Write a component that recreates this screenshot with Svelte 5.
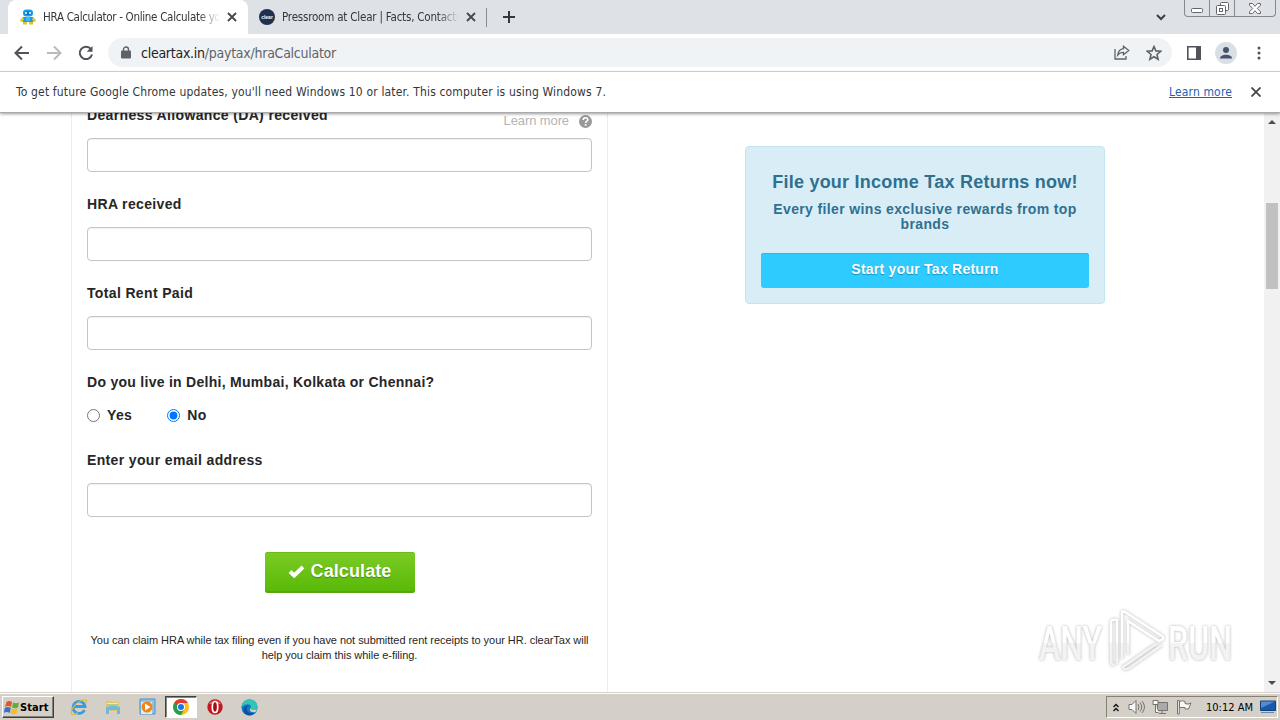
<script lang="ts">
	const fields = [
		{ id: 'da', label: 'Dearness Allowance (DA) received', help: true },
		{ id: 'hra', label: 'HRA received', help: false },
		{ id: 'rent', label: 'Total Rent Paid', help: false }
	];

	let metro = $state('no');
</script>

<div class="screen">
	<header class="tabstrip">
		<div class="tab active">
			<svg class="favicon" width="16" height="16" viewBox="0 0 16 16">
				<rect x="3" y="0.5" width="10" height="7" rx="3.2" fill="#16a5ee" />
				<rect x="4.5" y="2.3" width="7" height="3.6" rx="1.6" fill="#0878c8" />
				<circle cx="6" cy="4" r="1" fill="#fff" />
				<circle cx="10" cy="4" r="1" fill="#fff" />
				<path d="M3 8h10l.6 5H2.4z" fill="#1a9be8" />
				<path d="M3 8 0 11l1 2 3-2zM13 8l3 3-1 2-3-2zM3 13h4v2.5H3zM9 13h4v2.5H9z" fill="#e5c428" />
				<path d="M6 8h4v4H6z" fill="#2cc3f4" />
			</svg>
			<span class="tab-title">HRA Calculator - Online Calculate you</span>
			<svg class="close" width="10" height="10" viewBox="0 0 10 10"><path d="m1 1 8 8M9 1 1 9" /></svg>
		</div>
		<div class="tab second">
			<svg class="favicon" width="16" height="16" viewBox="0 0 16 16">
				<circle cx="8" cy="8" r="8" fill="#20304f" />
				<text x="8" y="10" text-anchor="middle" class="logo-text">clear</text>
			</svg>
			<span class="tab-title">Pressroom at Clear | Facts, Contacts</span>
			<svg class="close" width="10" height="10" viewBox="0 0 10 10"><path d="m1 1 8 8M9 1 1 9" /></svg>
		</div>
		<span class="separator"></span>
		<svg class="plus" width="12" height="12" viewBox="0 0 12 12"><path d="M6 0v12M0 6h12" /></svg>
		<svg class="chevron" width="10" height="7" viewBox="0 0 10 7"><path d="m1 1 4 4 4-4" /></svg>
		<div class="window-buttons">
			<span><svg width="12" height="5" viewBox="0 0 12 5"><rect x=".5" y=".5" width="11" height="4" rx="1" /></svg></span>
			<span>
				<svg width="13" height="13" viewBox="0 0 13 13">
					<path d="M4.500 3.500V1.500q0-1 1-1h6q1 0 1 1v6q0 1-1 1h-2" />
					<rect x=".5" y="3.500" width="9" height="9" rx="1" /><rect x="3.500" y="6.500" width="3" height="3" />
				</svg>
			</span>
			<span>
				<svg width="12" height="11" viewBox="0 0 12 11">
					<path d="M.5.5h3L6 3.300 8.500.5h3v1.700L8.300 5.500l3.200 3.300v1.700h-3L6 7.700l-2.500 2.800h-3V8.800l3.200-3.300L.5 2.200z" />
				</svg>
			</span>
		</div>
	</header>

	<div class="toolbar">
		<svg width="16" height="16" viewBox="0 0 16 16" class="nav"><path d="M15 8H2M8 1.500 1.500 8 8 14.500" /></svg>
		<svg width="16" height="16" viewBox="0 0 16 16" class="nav disabled"><path d="M1 8h13M8 1.500 14.500 8 8 14.500" /></svg>
		<svg width="16" height="16" viewBox="0 0 16 16" class="nav">
			<path d="M13 4.200A6.200 6.200 0 1 0 14 9.500" /><path d="M14.500 1v5.800H8.700z" class="solid" />
		</svg>
		<div class="omnibox">
			<svg width="10" height="13" viewBox="0 0 10 13">
				<path d="M2.500 6V3.500a2.500 2.500 0 0 1 5 0V6" fill="none" stroke="#5f6368" stroke-width="1.400" />
				<rect y="4.500" width="10" height="8" rx="1" fill="#5f6368" />
			</svg>
			<span class="url"><b>cleartax.in</b>/paytax/hraCalculator</span>
			<svg class="share" width="16" height="15" viewBox="0 0 16 15">
				<path d="M1 4v10h11v-3" />
				<path d="M9.500 1.200 14.800 5.500 9.500 9.700V7.300C6.500 7.300 5 8.300 3.700 10c.5-3.500 2.300-6 5.800-6.400z" />
			</svg>
			<svg class="star" width="16" height="16" viewBox="0 0 16 16">
				<path d="m8 1.500 1.900 4.400 4.800.4L11 9.500l1.100 4.700L8 11.700l-4.100 2.500L5 9.500 1.300 6.300l4.800-.4z" />
			</svg>
		</div>
		<svg class="panel" width="14" height="14" viewBox="0 0 14 14">
			<path d="M.8.8h12.400v12.400H.8z" fill="none" stroke="#505459" stroke-width="1.600" /><path d="M9 1h4v12H9z" fill="#505459" />
		</svg>
		<svg class="avatar" width="22" height="22" viewBox="0 0 22 22">
			<circle cx="11" cy="11" r="11" fill="#dadfe6" />
			<circle cx="11" cy="8" r="3" fill="#475270" /><path d="M5 16.500c0-5 12-5 12 0z" fill="#475270" />
		</svg>
		<svg class="dots" width="4" height="14" viewBox="0 0 4 14">
			<circle cx="2" cy="2" r="1.500" /><circle cx="2" cy="7" r="1.500" /><circle cx="2" cy="12" r="1.500" />
		</svg>
	</div>

	<div class="infobar">
		<span class="message">To get future Google Chrome updates, you'll need Windows 10 or later. This computer is using Windows 7.</span>
		<span class="link">Learn more</span>
		<svg class="close" width="10" height="10" viewBox="0 0 10 10"><path d="m.5.5 9 9M9.500.5l-9 9" /></svg>
	</div>

	<div class="viewport">
		<main class="calculator">
			{#each fields as field (field.id)}
				<div class="field">
					<div class="label-row">
						<label for={field.id}>{field.label}</label>
						{#if field.help}
							<span class="help">
								Learn more
								<svg width="13" height="13" viewBox="0 0 13 13">
									<circle cx="6.500" cy="6.500" r="6.500" fill="#999" />
									<path d="M4.200 5c0-3 4.600-3 4.600-.2 0 1.600-2.200 1.500-2.200 3.200M6.600 9v1.700" fill="none" stroke="#fff" stroke-width="1.600" />
								</svg>
							</span>
						{/if}
					</div>
					<input id={field.id} type="text" />
				</div>
			{/each}
			<div class="question">Do you live in Delhi, Mumbai, Kolkata or Chennai?</div>
			<div class="radios">
				<label><input type="radio" value="yes" bind:group={metro} />Yes</label>
				<label><input type="radio" value="no" bind:group={metro} />No</label>
			</div>
			<div class="field">
				<div class="label-row"><label for="email">Enter your email address</label></div>
				<input id="email" type="text" />
			</div>
			<button class="calculate">
				<svg width="17" height="13" viewBox="0 0 17 13"><path d="m2 6.500 4.200 4L15 2" /></svg>
				<span>Calculate</span>
			</button>
			<p class="note">
				<span>You can claim HRA while tax filing even if you have not submitted rent receipts to your HR. clearTax will</span>
				<span>help you claim this while e-filing.</span>
			</p>
		</main>
		<aside class="promo">
			<h3>File your Income Tax Returns now!</h3>
			<p>Every filer wins exclusive rewards from top<br />brands</p>
			<button>Start your Tax Return</button>
		</aside>
		<div class="scrollbar">
			<svg width="8" height="4" viewBox="0 0 8 4"><path d="M0 4h8L4 0z" /></svg>
			<span class="thumb"></span>
			<svg class="down" width="8" height="4" viewBox="0 0 8 4"><path d="M0 0h8L4 4z" /></svg>
		</div>
	</div>

	<footer class="taskbar">
		<div class="start">
			<svg width="16" height="15" viewBox="0 0 16 15">
				<path d="M2.500 2Q5 0 8 2L7 7Q4 5 1 7z" fill="#e4572b" /><path d="M9 2.500q3 1.500 6 0l-1 5q-3 1.500-6 0z" fill="#65ae35" />
				<path d="M.8 8q3-2 6 0l-1 5q-3-2-6 0z" fill="#3576c4" /><path d="M7.700 8.500q3 1.500 6 0l-1 5q-3 1.500-6 0z" fill="#f3bd28" />
			</svg>
			<span>Start</span>
		</div>
		<div class="launchers">
			<span>
				<svg width="18" height="18" viewBox="0 0 18 18">
					<path d="M14.500 12A6 6 0 1 1 15 8.500H4" fill="none" stroke="#3c9bdc" stroke-width="2.800" />
					<path d="M2 16C-1 13 6 4 13 2c4-1 4 1 3 3M2 16c1 1 4 0 6-1.500" fill="none" stroke="#dfb638" stroke-width="1.200" />
				</svg>
			</span>
			<span>
				<svg width="18" height="18" viewBox="0 0 18 18">
					<path d="M2 3h5l1 1h7v9H2z" fill="#e3c765" /><path d="M3 5h11v7H3z" fill="#f7e9a4" />
					<path d="M2 9q7-2.500 14 0v7h-3v-4H5v4H2z" fill="#72b8dc" /><path d="M3 7h11" stroke="#6db45b" />
				</svg>
			</span>
			<span>
				<svg width="18" height="18" viewBox="0 0 18 18">
					<path d="M2 1h15v15H2z" fill="#8fc4e8" stroke="#4b91c8" /><path d="M3 4h11v12H3z" fill="#d8edf8" />
					<circle cx="9" cy="9" r="5.500" fill="#f18416" /><path d="m7 5.500 5.500 3.500L7 12.500z" fill="#fff" />
				</svg>
			</span>
			<span class="running">
				<svg width="16" height="16" viewBox="0 0 16 16">
					<circle cx="8" cy="8" r="8" fill="#fbc116" />
					<path d="M1.100 4A8 8 0 0 1 14.900 4H8L4.500 10z" fill="#e33b2e" /><path d="M1.100 4A8 8 0 0 0 8 16l3.500-6L8 8z" fill="#289e4b" />
					<circle cx="8" cy="8" r="4" fill="#fff" /><circle cx="8" cy="8" r="3" fill="#1f73e8" />
				</svg>
			</span>
			<span>
				<svg width="16" height="16" viewBox="0 0 16 16">
					<circle cx="8" cy="8" r="7.700" fill="#c11a20" /><path d="M2 5a7 7 0 0 1 12 0z" fill="#e06b68" />
					<ellipse cx="8" cy="8" rx="2.700" ry="5.500" fill="#a60c13" stroke="#fff" stroke-width="1.700" />
				</svg>
			</span>
			<span>
				<svg width="17" height="17" viewBox="0 0 17 17">
					<circle cx="8.500" cy="8.500" r="8" fill="#1577c9" />
					<path d="M.5 8C1-2 16-2 16.500 7c0 5-7 5-7 2 2-3-3-6-9-1z" fill="#32c4b5" />
					<path d="M5.500 9c0 5 5 6 9 4-4 6-12 3-12-2 0-3 3-5 6-4-2 0-3 1-3 2z" fill="#0c529f" />
					<path d="M9.500 9c0 3 7 2 7 0l-2 4c-4 1-7-1-5-4z" fill="#d4d0c8" />
				</svg>
			</span>
		</div>
		<div class="tray">
			<svg class="expand" width="6" height="9" viewBox="0 0 6 9"><path d="m.5 4 2.500-2.500L5.500 4M.5 8 3 5.500 5.500 8" /></svg>
			<svg width="17" height="16" viewBox="0 0 17 16" class="tray-icon">
				<path d="M1 5.500h3l4-4v13l-4-4H1z" /><path d="M10 5q2 3 0 6M12 3.500q3.500 4.500 0 9M14 2q5 6 0 12" fill="none" />
			</svg>
			<svg width="17" height="16" viewBox="0 0 17 16" class="tray-icon">
				<path d="M5.500 3.500h10v8h-10z" fill="#aaa" /><path d="M7 14.500h7M10 12v2" /><path d="M1 1.500h5v4H1zM3.500 5.500v8h3" />
			</svg>
			<svg width="17" height="16" viewBox="0 0 17 16" class="tray-icon">
				<path d="M1.500 1.500h1.800V15H1.500zM3.500 2.500q3-1.500 5.500 0v2q3 1.500 6-.5l-2.500 6H9V8.500H3.500z" />
			</svg>
			<time>10:12 AM</time>
			<svg width="16" height="14" viewBox="0 0 16 14">
				<path d="M.5 1h15v9.500H.5z" fill="#1759ae" stroke="#164177" /><path d="M1 1.500h14L1 8z" fill="#518bd0" /><path d="M1 12.500h13" stroke="#6688a7" />
			</svg>
		</div>
	</footer>

	<svg class="watermark" width="210" height="76" viewBox="0 0 210 76">
		<defs>
			<linearGradient id="shine" x1="0" y1="18" x2="0" y2="60" gradientUnits="userSpaceOnUse">
				<stop offset=".52" stop-color="#fff" /><stop offset=".53" stop-color="#f3f3f3" />
			</linearGradient>
		</defs>
		<text x="9" y="57" textLength="63" lengthAdjust="spacingAndGlyphs">ANY</text>
		<text x="138" y="57" textLength="64" lengthAdjust="spacingAndGlyphs">RUN</text>
		<path d="M87 61V17q-6-1-6 2v40q0 3 4 3M92 56V10q0-3 3-1l37 24q3 3-1 4l-2 1L98 18v34M132 42 99 65q-5 3-6-1l33-23" />
	</svg>
</div>

<style>
	:global(body) {
		margin: 0;
		overflow: hidden;
	}

	.screen {
		position: relative;
		width: 1280px;
		height: 720px;
		display: flex;
		flex-direction: column;
		overflow: hidden;
		background: #fff;
		font-family: "DejaVu Sans Condensed", "DejaVu Sans", sans-serif;
		font-stretch: condensed;
		font-size: 11px;
		color: #33363a;
	}

	svg {
		display: block;
		flex: none;
	}

	.tabstrip {
		height: 34px;
		display: flex;
		align-items: center;
		background: #dee1e6;
		padding-left: 8px;
	}

	.tab {
		display: flex;
		align-items: center;
		height: 34px;
		box-sizing: border-box;
		padding-left: 12px;
		width: 240px;
	}

	.tab.active {
		background: #fff;
		border-radius: 8px 8px 0 0;
	}

	.tab.second {
		width: 238px;
		padding-left: 11px;
	}

	.tab-title {
		width: 177px;
		margin-left: 7px;
		overflow: hidden;
		white-space: nowrap;
		font-size: 11.5px;
		letter-spacing: -0.3px;
		mask-image: linear-gradient(to right, #000 155px, transparent 177px);
	}

	.second .tab-title {
		letter-spacing: -0.2px;
	}

	.logo-text {
		font: bold 5px "Liberation Sans", sans-serif;
		fill: #fff;
	}

	.close {
		margin-left: 7px;
		stroke: #44474b;
		stroke-width: 1.8;
	}

	.separator {
		width: 1px;
		height: 19px;
		background: #888c92;
	}

	.plus {
		margin-left: 16px;
		stroke: #34373b;
		stroke-width: 2;
	}

	.chevron {
		margin-left: auto;
		margin-right: 18px;
		fill: none;
		stroke: #3c4043;
		stroke-width: 2;
	}

	.window-buttons {
		display: flex;
		align-self: flex-start;
		width: 92px;
		height: 17px;
		margin-right: 4px;
		box-sizing: border-box;
		border: 1px solid #85898f;
		border-top: none;
		border-radius: 0 0 4px 4px;
		fill: #fff;
		stroke: #62666b;
	}

	.window-buttons span {
		display: flex;
		justify-content: center;
		align-items: center;
		width: 24px;
		border-right: 1px solid #85898f;
	}

	.window-buttons span:first-child {
		align-items: flex-end;
		padding-bottom: 3px;
	}

	.window-buttons span:last-child {
		flex: 1;
		border: 0;
	}

	.toolbar {
		height: 37px;
		display: flex;
		align-items: center;
		padding-left: 14px;
		border-bottom: 1px solid #d9dbdf;
	}

	.nav {
		margin-right: 16px;
		fill: none;
		stroke: #505357;
		stroke-width: 2;
	}

	.nav .solid {
		fill: #505357;
		stroke: none;
	}

	.disabled {
		stroke: #b8babd;
	}

	.omnibox {
		display: flex;
		align-items: center;
		width: 1064px;
		height: 29px;
		margin-left: -2px;
		padding: 0 10px 0 13px;
		box-sizing: border-box;
		background: #f0f3f5;
		border-radius: 15px;
	}

	.url {
		margin-left: 10px;
		font-size: 14px;
		letter-spacing: -0.26px;
		color: #606469;
	}

	.url b {
		font-weight: normal;
		color: #202124;
	}

	.share,
	.star {
		fill: none;
		stroke: #5f6368;
		stroke-width: 1.3;
	}

	.share {
		margin-left: auto;
		margin-right: 16px;
	}

	.star {
		stroke-width: 1.6;
	}

	.panel {
		margin-left: 15px;
	}

	.avatar {
		margin-left: 14px;
	}

	.dots {
		margin-left: 20px;
		fill: #505357;
	}

	.infobar {
		position: relative;
		z-index: 1;
		height: 40px;
		display: flex;
		align-items: center;
		padding: 0 19px 0 16px;
		background: #fff;
		border-bottom: 1px solid #aaa;
		box-shadow: 0 1px 3px rgba(0, 0, 0, 0.4);
		font-size: 12px;
	}

	.message {
		letter-spacing: 0.16px;
	}

	.link {
		margin-left: auto;
		margin-right: 12px;
		letter-spacing: 0.15px;
		color: #255fb5;
		text-decoration: underline;
	}

	.viewport {
		height: 579px;
		display: flex;
		overflow: hidden;
		font-family: "Liberation Sans", Arial, sans-serif;
		font-stretch: normal;
		font-size: 14px;
		font-weight: bold;
		letter-spacing: 0.35px;
		color: #262626;
	}

	.calculator {
		width: 537px;
		height: 600px;
		margin-left: 71px;
		padding: 0 15px;
		margin-top: -8px;
		box-sizing: border-box;
		border: solid #ececec;
		border-width: 0 1px;
		display: flex;
		flex-direction: column;
		flex: none;
	}

	.field {
		margin-bottom: 22px;
	}

	.label-row {
		display: flex;
		justify-content: space-between;
		height: 20px;
		margin-bottom: 13px;
		line-height: 20px;
	}

	.field input {
		display: block;
		width: 505px;
		height: 34px;
		box-sizing: border-box;
		border: 1px solid #c5c5c5;
		border-radius: 4px;
		background: #fff;
		box-shadow: inset 0 1px 1px rgba(0, 0, 0, 0.06);
	}

	.help {
		display: flex;
		align-items: center;
		gap: 10px;
		height: 20px;
		padding-top: 6px;
		color: #b5b5b5;
		font-size: 13px;
		font-weight: normal;
		letter-spacing: -0.1px;
	}

	.question {
		line-height: 20px;
		margin-bottom: 13px;
		letter-spacing: 0.28px;
	}

	.radios {
		display: flex;
		gap: 35px;
		height: 20px;
		margin-bottom: 25px;
	}

	.radios label {
		display: flex;
		align-items: center;
	}

	.radios input {
		width: 13px;
		height: 13px;
		margin: 0 7px 0 0;
	}

	button {
		font-family: inherit;
		font-weight: bold;
		color: #fff;
		border: none;
	}

	.calculate {
		display: flex;
		align-items: center;
		justify-content: center;
		gap: 6px;
		align-self: center;
		width: 150px;
		height: 41px;
		margin-top: 13px;
		padding: 0 0 2px;
		font-size: 18px;
		letter-spacing: 0.1px;
		border-radius: 3px;
		background: linear-gradient(#7ccb25, #58b807);
		box-shadow: inset 0 1px #69bd18, inset 0 -2px #55a80e;
		text-shadow: 0 1px 1px #438d0a;
	}

	.calculate svg {
		fill: none;
		stroke: #fff;
		stroke-width: 4;
	}

	.note {
		margin: 40px -10px 0;
		display: flex;
		flex-direction: column;
		align-items: center;
		line-height: 15px;
		font-size: 11px;
		font-weight: normal;
		letter-spacing: -0.04px;
		white-space: nowrap;
	}

	.promo {
		width: 360px;
		height: 158px;
		margin: 33px 0 0 137px;
		padding: 24px 15px 15px;
		box-sizing: border-box;
		background: #d9edf7;
		border: 1px solid #c1e5ee;
		border-radius: 4px;
		text-align: center;
		color: #30708f;
	}

	.promo h3 {
		margin: 0;
		line-height: 22px;
		font-size: 18px;
		letter-spacing: 0.24px;
	}

	.promo p {
		margin: 9px -10px 21px;
		line-height: 15px;
		font-size: 14px;
		letter-spacing: 0.36px;
	}

	.promo button {
		display: block;
		width: 328px;
		height: 35px;
		padding: 0 0 3px;
		background: #2dcbff;
		border-radius: 3px;
		box-shadow: inset 0 1px #25baf0;
		font-size: 14px;
		letter-spacing: 0.25px;
		text-shadow: 0 1px 1px #168dba;
	}

	.scrollbar {
		width: 16px;
		margin-left: auto;
		display: flex;
		flex-direction: column;
		align-items: center;
		padding-top: 7px;
		box-sizing: border-box;
		background: #f1f1f1;
		fill: #4d4d4d;
	}

	.thumb {
		width: 12px;
		height: 86px;
		margin-top: 79px;
		background: #c1c1c1;
	}

	.down {
		margin-top: auto;
		margin-bottom: 7px;
	}

	.taskbar {
		height: 28px;
		box-sizing: border-box;
		display: flex;
		align-items: center;
		padding: 2px 2px 1px;
		border-top: 1px solid #d4d0c8;
		box-shadow: inset 0 1px #fff;
		background: #d4d0c8;
		color: #000;
	}

	.start {
		width: 52px;
		height: 22px;
		box-sizing: border-box;
		display: flex;
		align-items: center;
		padding-left: 1px;
		border: 1px solid;
		border-color: #fff #404040 #404040 #fff;
		box-shadow: inset -1px -1px #858077;
		font-weight: bold;
		letter-spacing: 0.1px;
	}

	.launchers {
		display: flex;
		margin-left: 9px;
		gap: 2px;
	}

	.launchers span {
		display: flex;
		align-items: center;
		justify-content: center;
		width: 32px;
		height: 22px;
		box-sizing: border-box;
	}

	.launchers .running {
		background: #fff;
		border: 1px solid;
		border-color: #404040 #fff #fff #404040;
		box-shadow: inset 1px 1px #8a867f;
	}

	.tray {
		display: flex;
		align-items: center;
		width: 172px;
		height: 22px;
		margin-left: auto;
		padding-left: 6px;
		box-sizing: border-box;
		border: 1px solid;
		border-color: #858177 #fff #fff #858177;
	}

	.expand {
		margin-right: 9px;
		fill: none;
		stroke: #111;
		stroke-width: 1.4;
	}

	.tray-icon {
		margin-right: 7px;
		fill: #f7f7f5;
		stroke: #76736e;
	}

	time {
		margin-left: 6px;
		margin-right: 7px;
		white-space: nowrap;
	}

	.watermark {
		position: absolute;
		left: 1030px;
		top: 603px;
		fill: none;
		stroke: url(#shine);
		stroke-width: 2.5;
		filter: drop-shadow(0 0 1.5px rgba(0, 0, 0, 0.3));
	}

	.watermark text {
		font: 500 48px Roboto, sans-serif;
		fill: url(#shine);
		stroke: none;
	}
</style>
